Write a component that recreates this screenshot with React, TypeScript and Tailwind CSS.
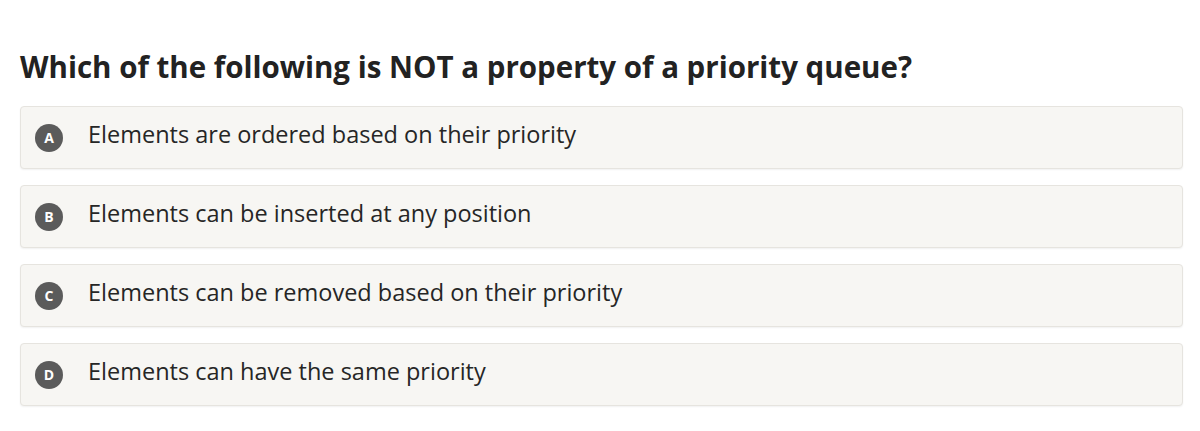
import React from "react";

const options = [
  { letter: "A", text: "Elements are ordered based on their priority" },
  { letter: "B", text: "Elements can be inserted at any position" },
  { letter: "C", text: "Elements can be removed based on their priority" },
  { letter: "D", text: "Elements can have the same priority" },
];

export default function App() {
  return (
    <div
      className="w-[1200px] h-[431px] bg-white overflow-hidden"
      style={{ fontFamily: "'Open Sans', Lato, sans-serif" }}
    >
      <div className="pl-[20px] pt-[49px]">
        <h1 className="text-[29.5px] leading-[36px] font-bold text-[#222222]">
          Which of the following is NOT a property of a priority queue?
        </h1>
        <div className="mt-[21px] flex flex-col gap-[16px] w-[1163px]">
          {options.map((o) => (
            <div
              key={o.letter}
              className="h-[63px] flex items-center bg-[#f7f6f3] border border-[#e6e4df] rounded-[4px] shadow-[0_1px_2px_rgba(0,0,0,0.06)] pl-[14px]"
            >
              <div className="w-[28px] h-[28px] rounded-full bg-[#5b5b5b] text-white text-[14px] font-bold flex items-center justify-center shrink-0">
                {o.letter}
              </div>
              <div className="ml-[25px] pb-[6px] text-[23.5px] text-[#262626]">{o.text}</div>
            </div>
          ))}
        </div>
      </div>
    </div>
  );
}
